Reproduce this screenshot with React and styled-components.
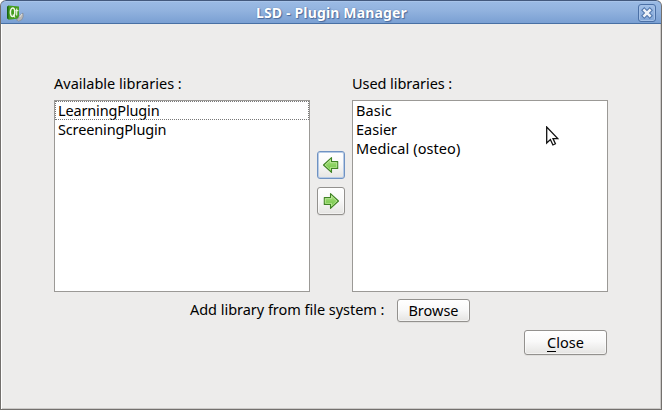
import React from "react";
import styled, { createGlobalStyle } from "styled-components";

const GlobalStyle = createGlobalStyle`
  * { box-sizing: border-box; }
  body { margin: 0; background: #fff; overflow: hidden; }
`;

const Window = styled.main`
  width: 662px;
  height: 410px;
  display: flex;
  flex-direction: column;
  overflow: hidden;
  background: #edeceb;
  border: 1px solid #73706d;
  border-top: 0;
  border-radius: 6px 6px 0 0;
  box-shadow: inset 1px 0 #fff, inset -1px -1px #cbc9c7;
  color: #000;
  font: 14.5px/19px "Noto Sans", "Open Sans", sans-serif;
`;

const TitleBar = styled.header`
  flex: none;
  height: 24px;
  margin: 0 -1px;
  padding: 0 5px 0 6px;
  display: grid;
  grid-template-columns: 18px 1fr 18px;
  align-items: center;
  border: 1px solid #4870a4;
  border-top-color: #43597d;
  border-radius: 6px 6px 0 0;
  background: linear-gradient(#b5cdee 0, #9abae4 1px, #91b2de 45%, #7aa0d3 100%);
`;

const Title = styled.h1`
  margin: 0;
  padding-top: 1px;
  text-align: center;
  color: #fff;
  font-size: 14px;
  font-weight: 700;
  line-height: 22px;
  white-space: nowrap;
  letter-spacing: 0.16px;
  text-shadow: 1px 1px 1px #49699b, 0 0 1px #49699b;
`;

const WindowClose = styled.button`
  width: 18px;
  height: 18px;
  padding: 0;
  border: 1px solid #4b70a6;
  border-radius: 3px;
  background: linear-gradient(#a2c0e8, #80a5d7);
  box-shadow: inset 0 0 0 1px #a5c1e7;
  svg { display: block; }
`;

const Content = styled.div`
  width: 554px;
  margin: 50px 0 0 53px;
  display: flex;
  flex-direction: column;
`;

const Panels = styled.section`
  display: grid;
  grid-template-columns: 256px 28px 256px;
  column-gap: 7px;
`;

const Panel = styled.div`
  display: flex;
  flex-direction: column;
  gap: 7px;
`;

const Label = styled.span`
  height: 19px;
  white-space: nowrap;
  letter-spacing: ${(p) => p.$track || 0}px;
`;

const List = styled.ul`
  height: 192px;
  margin: 0;
  padding: 0;
  list-style: none;
  background: #fff;
  border: 1px solid #9b9996;
`;

const Item = styled.li`
  height: 19px;
  padding-left: 3px;
  white-space: nowrap;
  letter-spacing: ${(p) => p.$track || 0}px;
  outline: ${(p) => (p.$focused ? "1px dotted #777" : "none")};
  outline-offset: -1px;
`;

const Transfer = styled.div`
  display: flex;
  flex-direction: column;
  gap: 8px;
  padding-top: 77px;
`;

const Button = styled.button`
  display: flex;
  align-items: center;
  justify-content: center;
  width: ${(p) => p.$w}px;
  height: ${(p) => p.$h}px;
  padding: 0;
  border: 1px solid ${(p) => (p.$active ? "#6f92c2" : "#93918e")};
  border-radius: 3px;
  background: linear-gradient(#fff, #f9f9f9 45%, #e5e4e2);
  box-shadow: ${(p) => (p.$active ? "inset 0 0 0 1px #b7cbe6" : "inset 0 0 0 1px rgba(255,255,255,.5), 0 1px #e0dfdd")};
  color: #000;
  font: inherit;
`;

const Import = styled.div`
  display: flex;
  align-items: flex-start;
  height: 24px;
  margin: 7px 0 0 136px;
`;

const ImportLabel = styled(Label)`
  width: 207px;
  margin-top: 1px;
`;

const Footer = styled.footer`
  display: flex;
  justify-content: flex-end;
  margin: 7px 1px 0 0;
`;

const Mnemonic = styled.span`
  border-bottom: 1px solid #000;
  display: inline-block;
  height: 19px;
`;

const Pointer = styled.svg`
  position: absolute;
  left: 546px;
  top: 126px;
`;

const Arrow = ({ right }) => (
  <svg width="18" height="18" viewBox="0 0 18 18">
    <defs>
      <linearGradient id="leaf" x2="0" y2="1">
        <stop stopColor="#b4e38c" />
        <stop offset="1" stopColor="#62bf35" />
      </linearGradient>
    </defs>
    <g transform={right ? "translate(18) scale(-1 1)" : undefined}>
      <path d="M1.5 9 9.5 1.6v4h6.2v6.8H9.5v4Z" fill="url(#leaf)" stroke="#3f8224" strokeWidth="1.1" strokeLinejoin="round" />
      <path d="M3.1 9 8.5 4v2.6h6.2v4.8H8.5V14Z" fill="none" stroke="#c8efa6" strokeWidth=".7" />
    </g>
  </svg>
);

const AppIcon = () => (
  <svg width="18" height="18" viewBox="0 0 18 18">
    <path d="m0 2.5 2-1v14l-2-1Z" fill="#176510" />
    <path d="m1.5 1.5 10.5 1v12l-10.5 1.2Z" fill="#449d1e" />
    <ellipse cx="5.6" cy="8.2" rx="2.2" ry="4.2" fill="none" stroke="#f0f6e6" strokeWidth="1.5" />
    <path d="m6 10.5 2 3M9.7 4.5v7M8.4 6.7h3" stroke="#e9f4dc" strokeWidth="1.2" fill="none" />
    <path d="m16 9-3.5 2.8-2 3.3-1.2.6 2.4 1.5 3.2-1.6 1.3-3Z" fill="#b9b9b7" stroke="#858b95" strokeWidth=".7" />
    <path d="m15 10-2.3 3" stroke="#e6e6e4" />
  </svg>
);

export default function App() {
  return (
    <>
      <GlobalStyle />
      <Window>
        <TitleBar>
          <AppIcon />
          <Title>LSD - Plugin Manager</Title>
          <WindowClose aria-label="Close window">
            <svg width="16" height="16" viewBox="0 0 16 16">
              <path d="m5.3 5.3 5.4 5.4m0-5.4-5.4 5.4" stroke="#5277ac" strokeWidth="4.6" strokeLinecap="square" />
              <path d="m5.3 5.3 5.4 5.4m0-5.4-5.4 5.4" stroke="#edf2f8" strokeWidth="2.5" strokeLinecap="square" />
            </svg>
          </WindowClose>
        </TitleBar>
        <Content>
          <Panels>
            <Panel>
              <Label>Available libraries :</Label>
              <List>
                <Item $focused $track={-0.15}>LearningPlugin</Item>
                <Item $track={-0.15}>ScreeningPlugin</Item>
              </List>
            </Panel>
            <Transfer>
              <Button $w={28} $h={28} $active aria-label="Remove library"><Arrow /></Button>
              <Button $w={28} $h={28} aria-label="Use library"><Arrow right /></Button>
            </Transfer>
            <Panel>
              <Label $track={-0.06}>Used libraries :</Label>
              <List>
                <Item $track={0.15}>Basic</Item>
                <Item>Easier</Item>
                <Item $track={0.08}>Medical (osteo)</Item>
              </List>
            </Panel>
          </Panels>
          <Import>
            <ImportLabel $track={-0.03}>Add library from file system :</ImportLabel>
            <Button $w={73} $h={23}>Browse</Button>
          </Import>
          <Footer>
            <Button $w={83} $h={25}><Mnemonic>C</Mnemonic>lose</Button>
          </Footer>
        </Content>
      </Window>
      <Pointer width="13" height="21" viewBox="0 0 13 21">
        <path d="M.7 1v16l3.7-3.4 2.5 5.4 2.5-1.2L7 12.6h4.8Z" fill="#fff" stroke="#111" strokeWidth="1.3" />
      </Pointer>
    </>
  );
}
